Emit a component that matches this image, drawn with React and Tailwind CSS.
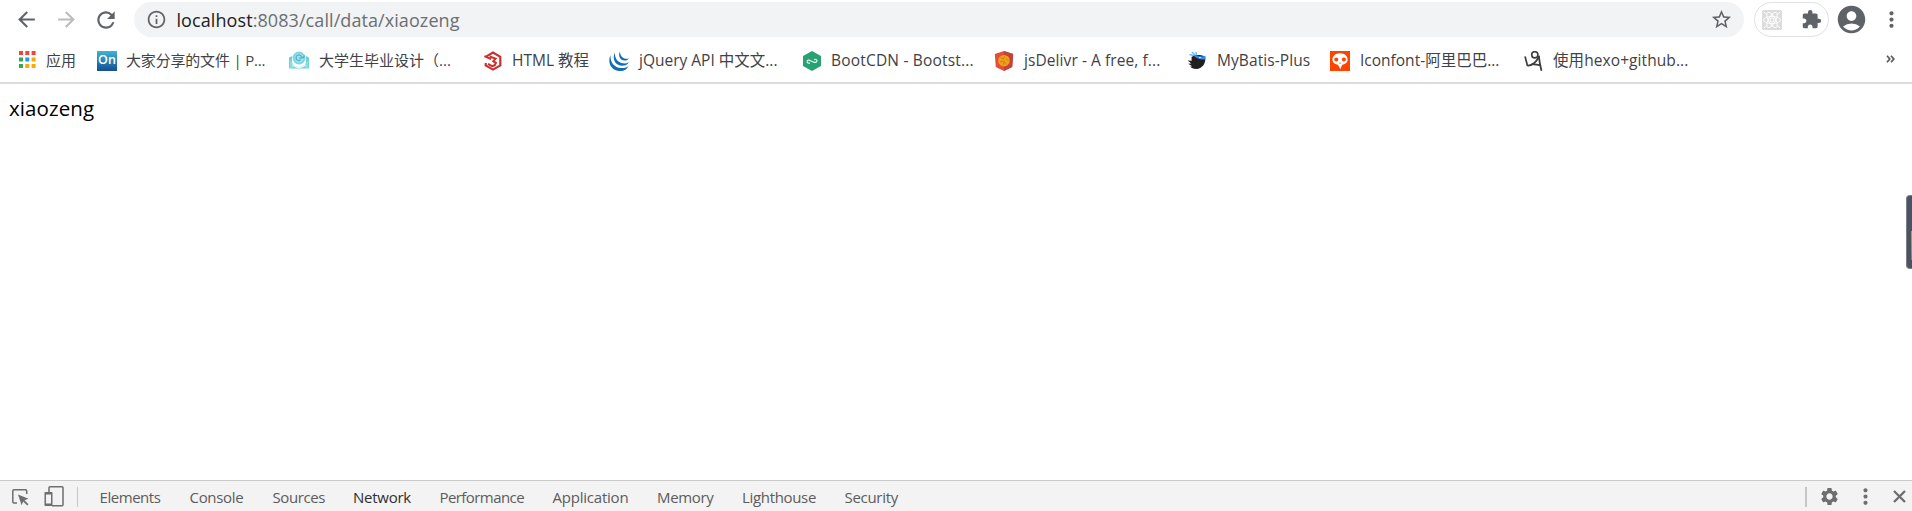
import {
  MdArrowBack,
  MdArrowForward,
  MdRefresh,
  MdInfoOutline,
  MdStarBorder,
  MdExtension,
  MdAccountCircle,
  MdMoreVert,
  MdSettings,
} from "react-icons/md";

function AppsIcon() {
  const colors = ["#f44336", "#f44336", "#f44336", "#34a853", "#2196f3", "#fba905", "#34a853", "#fba905", "#fba905"];
  return (
    <svg width="17" height="17" viewBox="0 0 17 17" className="mb-[2px]">
      {colors.map((c, i) => (
        <rect key={i} x={(i % 3) * 6.3} y={Math.floor(i / 3) * 6.5} width="4" height="4" fill={c} />
      ))}
    </svg>
  );
}

function OnIcon() {
  return (
    <div className="flex size-5 items-center justify-center bg-linear-to-b from-[#3fb4d2] to-[#164f92] text-[12.5px] leading-none font-semibold text-white">
      On
    </div>
  );
}

function BookIcon() {
  return (
    <svg width="20" height="20" viewBox="0 0 20 20">
      <path d="M0 6.500l3-1.500v8l7 4 7-4V5l3 1.500v11H12l-2 1-2-1H0z" fill="#6fd0dc" />
      <path d="M1 9l3 4v4H1zM19 9l-3 4v4h3z" fill="#8fdbe4" />
      <path d="M3.500 13l6.500 4 6.500-4v2l-6.500 3-6.500-3z" fill="#e4f8fa" />
      <circle cx="10" cy="7" r="5.500" fill="#a5e2ea" stroke="#7fd5df" strokeWidth="2" />
      <path d="M12.500 6a2.800 2.800 0 1 0-1 3M10 7c2 0 4.500 1 5.500-2.500" fill="none" stroke="#44b3c6" strokeWidth="1.200" />
    </svg>
  );
}

function HtmlIcon() {
  return (
    <svg width="20" height="20" viewBox="0 0 20 20" fill="none" stroke="#c9302f">
      <path d="M3 5.6L10 1.6l7.3 4.2v8.6L10 18.6l-7.3-4.2V12" strokeWidth="2.2" />
      <path d="M1.4 5.2L8 8.2" strokeWidth="2" />
      <path d="M6.6 5.5l6 2.1-2.3 2.6 2.6 1.6-1.2 2.5-2.7.8-4-2.2" strokeWidth="2" />
    </svg>
  );
}

function JqueryIcon() {
  return (
    <svg width="20" height="20" viewBox="0 0 20 20" fill="#0f6db4">
      <path d="M1.500 4C-1.500 10 1 20 11 20c4.500 0 7-2 8.500-5-2 1.700-4.500 2.300-7.500 2C5 16.500 1 11 1.500 4z" />
      <path d="M6 1.500C3 7 5.500 14.500 13 14.800c3.500 0 5.500-1.300 6.700-3.600-1.800 1-3.700 1.400-6 1.100C8.500 11.500 5.500 7 6 1.500z" />
      <path d="M11 .5C8.800 4.500 11 9.500 15.600 9.600c2 0 3.400-.8 4.200-2.300-1.200.5-2.300.6-3.600.4C13 7 11 4 11 .5z" />
    </svg>
  );
}

function BootCdnIcon() {
  return (
    <svg width="20" height="20" viewBox="0 0 20 20">
      <path d="M10 0l9 5v10l-9 5-9-5V5z" fill="#28a173" />
      <path
        d="M8 11.900c-1.500.6-2.900.1-2.900-1.200 0-1.700 2-2 3.400-1l2.900 1.300c1.500.9 3.600.4 3.600-1.200 0-1.400-1.600-1.800-3-1.100"
        fill="none"
        stroke="#e9f6f1"
        strokeWidth="1.200"
      />
    </svg>
  );
}

function JsDelivrIcon() {
  return (
    <svg width="20" height="20" viewBox="0 0 20 20">
      <path d="M10 0l9.200 3-1 13L10 20 1.800 16 .8 3z" fill="#e44d3a" />
      <path d="M10 0l9.200 3-1 13L10 20z" fill="#c3423a" />
      <circle cx="10" cy="9.700" r="5.800" fill="#f0a117" />
      <path d="M6.500 6.500l3 1.500 1-2.500M6 11l3.500-1 3 3.500M12 8l2.500 1.500M10 11l-1 3" fill="none" stroke="#c97d12" strokeWidth=".9" />
    </svg>
  );
}

function MyBatisIcon() {
  return (
    <svg width="20" height="20" viewBox="0 0 20 20">
      <path d="M4.500 6C7 4 17 2.500 18.200 7c.8 5-3 11-9 11-3 0-5-1-6-2.500l2-.3-4-2.400 3-.3-3.500-3 4 .2z" fill="#231f20" />
      <path d="M2.500 3.500l4 1M5 1l3 3M9 1l.5 3" stroke="#6dbcf5" strokeWidth="1.500" fill="none" />
      <path d="M6 3.800c4 1.500 8 2.500 12.500 1l.1 3.500c-4 1-9-.5-12-3.500z" fill="#2f8fe8" />
      <circle cx="13" cy="6.600" r=".8" fill="#fff" />
    </svg>
  );
}

function IconfontIcon() {
  return (
    <svg width="20" height="20" viewBox="0 0 20 20">
      <path d="M0 0h20v20H0z" fill="#ff4400" />
      <path d="M10 2.300c4.600 0 7.600 2.800 7.600 6.200 0 3.300-2.400 4.600-5.400 5.200L10.300 18.300 8 13.700c-3.300-.6-5.500-2-5.500-5.200 0-3.400 3-6.200 7.500-6.200z" fill="#fff" />
      <circle cx="6.300" cy="8.600" r="2" fill="#ff4400" />
      <circle cx="13.900" cy="8.600" r="2" fill="#ff4400" />
      <path d="M9.200 12.200h1.800" stroke="#ff4400" strokeWidth=".7" />
    </svg>
  );
}

function HexoIcon() {
  return (
    <svg width="20" height="20" viewBox="0 0 20 20" fill="none" stroke="#3d3d3d" strokeLinecap="round">
      <circle cx="10.800" cy="3.800" r="3.100" strokeWidth="1.600" />
      <path d="M1.200 6l2.200 8.500c4 .3 8-2 11.500-8.500" strokeWidth="1.700" />
      <path d="M15 5.500c.3 5 1.300 9 2.300 13.500M8.500 12.800c2 .8 5 .8 7 1.400" strokeWidth="1.800" />
    </svg>
  );
}

const bookmarks = [
  { icon: AppsIcon, label: "应用", box: "w-[78px]", gap: "gap-[10px]", track: "text-[15px]" },
  { icon: OnIcon, label: "大家分享的文件 | P...", box: "w-[192px]", gap: "gap-[9px]", track: "text-[15px] tracking-[-0.18px]" },
  { icon: BookIcon, label: "大学生毕业设计（...", box: "w-[194px]", gap: "gap-[10px]", track: "text-[15px]" },
  { icon: HtmlIcon, label: "HTML 教程", box: "w-[126px]", gap: "gap-[9px]", track: "" },
  { icon: JqueryIcon, label: "jQuery API 中文文...", box: "w-[193px]", gap: "gap-[10px]", track: "" },
  { icon: BootCdnIcon, label: "BootCDN - Bootst...", box: "w-[192px]", gap: "gap-[9px]", track: "tracking-[0.19px]" },
  { icon: JsDelivrIcon, label: "jsDelivr - A free, f...", box: "w-[193px]", gap: "gap-[10px]", track: "tracking-[0.08px]" },
  { icon: MyBatisIcon, label: "MyBatis-Plus", box: "w-[143px]", gap: "gap-[10px]", track: "tracking-[0.08px]" },
  { icon: IconfontIcon, label: "Iconfont-阿里巴巴...", box: "w-[194px]", gap: "gap-[10px]", track: "" },
  { icon: HexoIcon, label: "使用hexo+github...", box: "w-[194px]", gap: "gap-[9px]", track: "tracking-[0.08px]" },
];

const tabs = [
  { label: "Elements", cls: "w-[90px] tracking-[-0.45px]" },
  { label: "Console", cls: "w-[83px] tracking-[-0.3px]" },
  { label: "Sources", cls: "w-[80.5px] tracking-[-0.4px]" },
  { label: "Network", cls: "w-[86.5px] tracking-[-0.25px] text-[#2f2f2f]" },
  { label: "Performance", cls: "w-[113px] tracking-[-0.57px]" },
  { label: "Application", cls: "w-[104.5px] tracking-[-0.22px]" },
  { label: "Memory", cls: "w-[85px] tracking-[-0.33px]" },
  { label: "Lighthouse", cls: "w-[102.5px] tracking-[-0.33px]" },
  { label: "Security", cls: "w-[80px] tracking-[-0.3px]" },
];

function Toolbar() {
  return (
    <div className="flex h-[39px] items-center pl-[14px] text-[#5f6368]">
      <MdArrowBack size={25} />
      <MdArrowForward size={25} className="ml-[15px] text-[#babcbe]" />
      <MdRefresh size={26} className="ml-[14px]" />
      <div className="ml-[15px] flex h-[35px] w-[1610px] items-center rounded-full bg-[#f1f3f4] pr-[11px] pl-[12px]">
        <MdInfoOutline size={21} />
        <span className="ml-[9.5px] flex-1 text-[18px] leading-6 tracking-[0.08px] text-[#6b6f73]">
          <span className="text-[#202124]">localhost</span>:8083/call/data/xiaozeng
        </span>
        <MdStarBorder size={23} />
      </div>
      <div className="ml-[10px] flex h-[35px] w-[75px] items-center justify-between rounded-full border border-[#dfe1e4] pr-[6px] pl-[7px]">
        <svg width="20" height="20" viewBox="0 0 20 20" fill="none" stroke="#fff" strokeWidth=".9">
          <rect width="20" height="20" rx="1.500" fill="#dcdcdc" stroke="none" />
          <ellipse cx="10" cy="10" rx="8.500" ry="3.500" />
          <ellipse cx="10" cy="10" rx="8.500" ry="3.500" transform="rotate(60 10 10)" />
          <ellipse cx="10" cy="10" rx="8.500" ry="3.500" transform="rotate(120 10 10)" />
          <circle cx="10" cy="10" r="2" />
          <path d="M2 2l3 3M18 2l-3 3M2 18l3-3M18 18l-3-3" />
        </svg>
        <MdExtension size={21} />
      </div>
      <MdAccountCircle size={33} className="ml-[6px]" />
      <MdMoreVert size={25} className="ml-[11px]" />
    </div>
  );
}

function BookmarksBar() {
  return (
    <div className="flex h-[43px] items-center pl-[19px] text-[15.5px] leading-5 text-[#3f4246]">
      {bookmarks.map(({ icon: Icon, label, box, gap, track }) => (
        <div key={label} className={`flex shrink-0 items-center whitespace-nowrap ${box} ${gap}`}>
          <Icon />
          <span className={`pb-[2px] ${track}`}>{label}</span>
        </div>
      ))}
      <svg width="9" height="8" viewBox="0 0 9 8" className="mr-[17px] mb-[3px] ml-auto" fill="none" stroke="#55585c" strokeWidth="1.700">
        <path d="M1 .8L3.800 4 1 7.200M5 .8L7.800 4 5 7.200" />
      </svg>
    </div>
  );
}

function DevtoolsBar() {
  return (
    <div className="flex h-[31px] shrink-0 items-center border-t border-[#cbcbcb] bg-[#f3f3f3] pl-[12px] text-[#6e6e6e]">
      <svg width="17" height="17" viewBox="0 0 17 17" className="mt-[3px]">
        <path d="M5 14H2a1.200 1.200 0 0 1-1.200-1.200V2A1.200 1.200 0 0 1 2 .8h11.500A1.200 1.200 0 0 1 14.700 2v3" fill="none" stroke="#6e6e6e" strokeWidth="1.500" />
        <path d="M6 5.500l10.500 4.300-4 1.500 4 4-1.300 1.200-4-4-1.600 3.700z" fill="#6e6e6e" />
      </svg>
      <svg width="20" height="21" viewBox="0 0 20 21" className="mt-px ml-[15px]">
        <path d="M5 6V1.800c0-.6.400-1 1-1h12c.6 0 1 .4 1 1v17c0 .6-.4 1-1 1H8" fill="none" stroke="#6e6e6e" strokeWidth="1.500" />
        <path d="M1.500 6h6c.6 0 1 .4 1 1v12c0 .6-.4 1-1 1h-6c-.6 0-1-.4-1-1V7c0-.6.400-1 1-1zM2 8.500v9h5v-9z" fill="#6e6e6e" fillRule="evenodd" />
      </svg>
      <div className="mt-px ml-[13px] h-5 w-px bg-[#c6c6c6]" />
      <div className="ml-[21.5px] flex pt-[2px] text-[15px] leading-5 text-[#5c5c5c]">
        {tabs.map((tab) => (
          <span key={tab.label} className={tab.cls}>
            {tab.label}
          </span>
        ))}
      </div>
      <div className="mt-px ml-auto h-5 w-[2px] bg-[#c6c6c6]" />
      <MdSettings size={21} className="mt-px ml-[12px]" />
      <MdMoreVert size={25} className="mt-px ml-[13px]" />
      <svg width="13" height="13" viewBox="0 0 13 13" className="mt-px mr-[6px] ml-[15px]" stroke="#6e6e6e" strokeWidth="2.300">
        <path d="M1 1l11 11M12 1L1 12" />
      </svg>
    </div>
  );
}

export default function App() {
  return (
    <div className="relative flex h-[511px] w-[1912px] flex-col overflow-hidden bg-white font-['Open_Sans','Noto_Sans_CJK_SC',sans-serif]">
      <Toolbar />
      <BookmarksBar />
      <div className="h-[2px] shrink-0 bg-[#dadce0]" />
      <main className="flex-1 pt-[10px] pl-[9px] text-[20.5px] leading-7 tracking-[0.1px] text-black">xiaozeng</main>
      <DevtoolsBar />
      <div className="absolute top-[195px] right-0 flex h-[74px] w-[6px] items-end justify-end rounded-l-[4px] border-y border-l border-[#7b7f88] bg-[#4d5262] pb-[8px]">
        <div className="h-[29px] w-px bg-linear-to-b from-[#a3a36a] to-[#4f9c98]" />
      </div>
    </div>
  );
}
